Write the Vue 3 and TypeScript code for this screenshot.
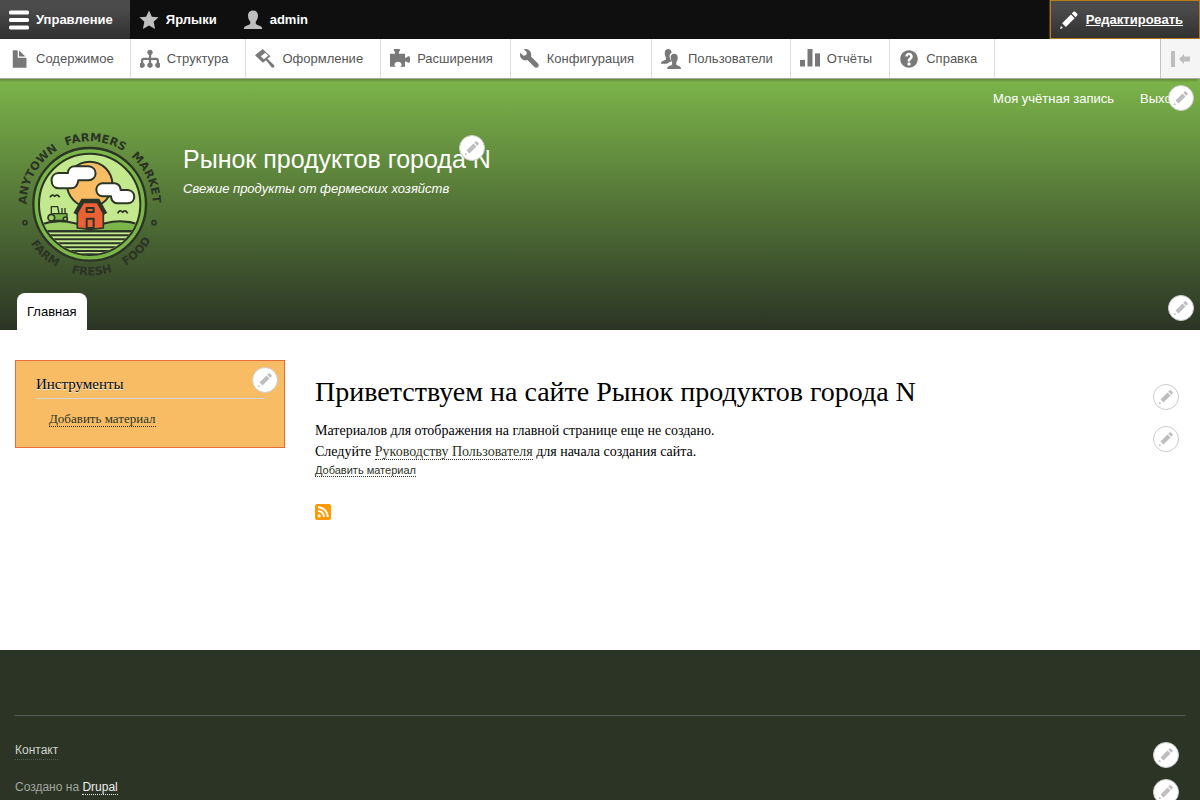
<script setup lang="ts">
import { h, type FunctionalComponent } from 'vue'

interface TrayItem {
  id: string
  label: string
  paths: string[]
}

const pencilPaths: string[] = [
  'M14.545 3.042l-1.586-1.585c-.389-.389-1.025-.389-1.414 0l-1.293 1.293 3 3 1.293-1.293c.389-.389.389-1.026 0-1.415z',
  'M9.5 3.5l3 3-7 7-3-3z',
  'M.908 14.775c-.087.262.055.397.316.312l2.001-.667-1.65-1.646z',
]

const Glyph: FunctionalComponent<{ paths: string[] }> = (props) =>
  h(
    'svg',
    { viewBox: '0 0 16 16', fill: 'currentColor', 'fill-rule': 'evenodd', 'aria-hidden': 'true' },
    props.paths.map((d) => h('path', { d })),
  )
Glyph.props = ['paths']

const hamburger = [
  'M1.2 0.4h13.6a1.2 1.2 0 0 1 1.2 1.2v.8a1.2 1.2 0 0 1-1.2 1.2H1.2A1.2 1.2 0 0 1 0 2.4v-.8A1.2 1.2 0 0 1 1.2.4z',
  'M1.2 6.3h13.6a1.2 1.2 0 0 1 1.2 1.2v.8a1.2 1.2 0 0 1-1.2 1.2H1.2A1.2 1.2 0 0 1 0 8.3v-.8A1.2 1.2 0 0 1 1.2 6.3z',
  'M1.2 12.3h13.6a1.2 1.2 0 0 1 1.2 1.2v.8a1.2 1.2 0 0 1-1.2 1.2H1.2A1.2 1.2 0 0 1 0 14.3v-.8a1.2 1.2 0 0 1 1.2-1.2z',
]
const star = ['M8 .3l2.300 5 5.400.5-4 3.600 1.200 5.700L8 12.300l-4.900 2.800 1.200-5.700-4-3.600 5.400-.5z']
const person = [
  'M8 .3c2.500 0 4 1.700 4 4.200 0 1.900-.8 3.600-1.800 4.600v1.700c0 .6 1 1 2.500 1.500 1.600.5 2.700 1.300 2.700 2.900H.6c0-1.600 1.100-2.400 2.700-2.900 1.500-.5 2.500-.9 2.500-1.500V9.100C4.800 8.100 4 6.400 4 4.500 4 2 5.500.3 8 .3z',
]

const tray: TrayItem[] = [
  {
    id: 'content',
    label: 'Содержимое',
    paths: [
      'M12.502 7h-5c-.276 0-.502-.225-.502-.5v-5c0-.275-.225-.5-.5-.5h-3c-.275 0-.5.225-.5.5v13.029c0 .275.225.5.5.5h10c.275 0 .5-.225.5-.5v-7.029c0-.275-.225-.5-.498-.5z',
      'M8.502 6h4c.275 0 .34-.159.146-.354l-4.293-4.292c-.195-.195-.353-.129-.353.146v4c0 .275.225.5.5.5z',
    ],
  },
  {
    id: 'structure',
    label: 'Структура',
    paths: [
      'M8 .5a2.200 2.200 0 0 1 .9 4.200V7h4.300c1.200 0 2 .8 2 2v1.900a2.200 2.200 0 1 1-1.800 0V9.300c0-.4-.2-.6-.6-.6H8.900v2.200a2.200 2.200 0 1 1-1.800 0V8.700H3.200c-.4 0-.6.2-.6.6v1.600a2.200 2.200 0 1 1-1.800 0V9c0-1.200.8-2 2-2h4.300V4.700A2.200 2.200 0 0 1 8 .5z',
    ],
  },
  {
    id: 'appearance',
    label: 'Оформление',
    paths: [
      'M6.200 0L0 5l6.300 5.900 2.500-2 4.300 5.500c.6.700 1.400.800 2 .200s.500-1.400-.2-2L10 7.800l2.300-2.100z M8.300 2.900l2.300 2.400-3.500 2.900-2.500-2.400z',
    ],
  },
  {
    id: 'extend',
    label: 'Расширения',
    paths: [
      'M3.600 0h3.800c.6 0 .8.700.5 1.300L7.100 2.400v1.400H12v3.200h1l1.200-1c.8-.5 1.800 0 1.800 1.300v2.200c0 1.300-1 1.700-1.800 1.200L13 9.900h-1v4.300H8.200c.9-.7 1.100-1.400 1-2.200-.2-1.100-1.300-1.900-2.800-1.900S3.800 10.900 3.600 12c-.1.800.2 1.500 1 2.200H0V3.800h4V2.400L3.100 1.300C2.800.7 3 0 3.600 0z',
    ],
  },
  {
    id: 'configuration',
    label: 'Конфигурация',
    paths: [
      'M14.416 11.586l-.01-.008v-.001l-5.656-5.656c.15-.449.252-.921.252-1.421 0-2.485-2.016-4.500-4.502-4.500-.505 0-.981.102-1.434.255l2.431 2.431-.588 2.196-2.196.588-2.445-2.445c-.162.464-.268.956-.268 1.475 0 2.486 2.014 4.500 4.500 4.500.5 0 .972-.102 1.421-.251l5.667 5.665c.781.781 2.047.781 2.828 0s.781-2.047 0-2.828z',
    ],
  },
  {
    id: 'people',
    label: 'Пользователи',
    paths: [
      'M5.800 0C7.400 0 8.400 1 8.500 2.700 7.200 3.600 6.700 5 6.900 6.500c.1 1.200.5 2.200 1.200 3-.3.800-1.300 1-2.200 1.400-.4.200-.8.500-1.100.800H0c0-1.300.7-2 1.900-2.400 1.200-.4 2-.6 2-1.100V6.600C3.300 5.800 3 4.600 3 3.200 3 1.200 4 0 5.800 0z',
      'M10.500 3.800c1.900 0 2.900 1.300 2.900 3.200 0 1.500-.5 2.700-1.200 3.500v1.600c0 .5.6.8 1.700 1.200 1.300.4 2.100 1.200 2.100 2.600H4.900c0-1.400.8-2.200 2.100-2.600 1.200-.4 1.900-.7 1.900-1.200v-1.600C8.100 9.700 7.700 8.500 7.700 7c0-1.900 1-3.200 2.800-3.200z',
    ],
  },
  {
    id: 'reports',
    label: 'Отчёты',
    paths: ['M0 8.700h4V14H0z', 'M6 0h4v14H6z', 'M12 3.500h4V14h-4z'],
  },
  {
    id: 'help',
    label: 'Справка',
    paths: [
      'M8.002 1c-3.868 0-7.002 3.134-7.002 7s3.134 7 7.002 7c3.865 0 7-3.134 7-7s-3.135-7-7-7zm3 5c0 .551-.16 1.085-.477 1.586l-.158.22c-.07.093-.189.241-.361.393-.168.148-.35.299-.545.447l-.203.189-.141.129-.096.17-.021.235v.63h-2.001v-.704c.026-.396.078-.73.204-.999.125-.269.271-.498.439-.688l.225-.21-.01-.015.176-.14.137-.128c.186-.139.357-.277.516-.417l.148-.18c.098-.152.168-.323.168-.518 0-.552-.447-1-1.001-1-.553 0-1.002.448-1.002 1h-2c0-1.657 1.343-3 3.002-3 1.656 0 3 1.343 3 3zm-1.750 6.619c0 .344-.281.625-.625.625h-1.250c-.345 0-.626-.281-.626-.625v-1.238c0-.344.281-.625.626-.625h1.250c.344 0 .625.281.625.625v1.238z',
    ],
  },
]
</script>

<template>
  <div class="page">
    <nav class="bar" aria-label="Панель администратора">
      <button type="button" class="bar-tab is-active"><Glyph class="icon" :paths="hamburger" /><span>Управление</span></button>
      <button type="button" class="bar-tab dim"><Glyph class="icon" :paths="star" /><span>Ярлыки</span></button>
      <button type="button" class="bar-tab dim"><Glyph class="icon" :paths="person" /><span>admin</span></button>
      <button type="button" class="bar-tab edit"><Glyph class="icon" :paths="pencilPaths" /><span>Редактировать</span></button>
    </nav>
    <nav class="tray" aria-label="Управление">
      <a v-for="item in tray" :key="item.id" class="tray-link" href="#">
        <Glyph class="icon" :paths="item.paths" /><span>{{ item.label }}</span>
      </a>
      <button type="button" class="orientation" aria-label="Вертикальная ориентация">
        <svg viewBox="0 0 20 16" aria-hidden="true">
          <path fill="#bebebe" d="M1 0h4v16H1zM9 8l5-5v2.500h6v5h-6V13z" />
        </svg>
      </button>
    </nav>

    <header class="header">
      <nav class="account contextual-region" aria-label="Учётная запись">
        <a href="#">Моя учётная запись</a>
        <a href="#">Выход</a>
        <button type="button" class="contextual" aria-label="Настроить меню"><Glyph :paths="pencilPaths" /></button>
      </nav>
      <div class="branding">
        <a href="#" class="logo" aria-label="Главная">
          <svg viewBox="0 0 480 495" aria-hidden="true">
            <defs>
              <path id="arc-top" d="M50 253A189 189 0 0 1 428 253" />
              <path id="arc-bottom" d="M26 253A213 213 0 0 0 452 253" />
              <clipPath id="scene"><circle cx="239" cy="253" r="149" /></clipPath>
            </defs>
            <g class="logo-text">
              <text><textPath href="#arc-top" startOffset="16.500%">ANYTOWN</textPath></text>
              <text><textPath href="#arc-top" startOffset="53%">FARMERS</textPath></text>
              <text><textPath href="#arc-top" startOffset="86%">MARKET</textPath></text>
              <text><textPath href="#arc-bottom" startOffset="26.500%">FARM</textPath></text>
              <text><textPath href="#arc-bottom" startOffset="51%">FRESH</textPath></text>
              <text><textPath href="#arc-bottom" startOffset="75%">FOOD</textPath></text>
            </g>
            <g fill="none" stroke="#2b3425" stroke-width="5">
              <circle cx="45" cy="308" r="6" />
              <circle cx="432" cy="308" r="6" />
            </g>
            <circle cx="239" cy="253" r="169" fill="#7ab648" stroke="#2b3425" stroke-width="7" />
            <circle cx="239" cy="253" r="152" fill="#c3e88d" stroke="#2b3425" stroke-width="6" />
            <g clip-path="url(#scene)" stroke="#2b3425" stroke-width="6" stroke-linejoin="round">
              <circle cx="239" cy="193" r="68" fill="#f8bc65" />
              <path d="M80 318Q160 285 240 328L240 334H80z" fill="#9ed067" />
              <path d="M400 318Q320 285 240 328L240 334H400z" fill="#7ab648" />
              <path d="M80 334H400M80 346H400M80 358H400M80 370H400M80 382H400M80 393H400" />
              <path d="M150 403H330V430H150z" fill="#7ab648" stroke="none" />
              <path d="M160 403H320" />
              <path d="M144 159H174C174 145 184 139 195 139H235C264 141 264 179 235 181H205C203 198 194 205 182 205H146C118 203 118 161 144 159z" fill="#fff" />
              <path d="M277 190H314C326 191 331 198 332 210H354C379 213 379 248 354 250H324C310 250 304 242 303 229H277C253 226 253 193 277 190z" fill="#fff" />
              <path d="M202 324V270L219 243H264L280 270V324L240 328z" fill="#eb6035" stroke-width="5" />
              <path d="M196 282L218 243H264L286 282" fill="none" stroke-width="13" stroke-linejoin="miter" />
              <path d="M230 264H251V276H230z M230 296H251V324H230z" fill="#eb6035" />
              <g fill="none" stroke-width="5">
                <path d="M120 232Q127 220 134 229Q141 220 149 232M323 280Q330 267 338 277Q345 267 353 280" />
                <path d="M124 281V260H143L147 280M156 281V264M165 264V282" stroke-width="4" />
                <path d="M128 281H171V301H128z" fill="#7ab648" stroke-width="4" />
                <circle cx="124" cy="293" r="10" fill="#9ed067" />
                <circle cx="166" cy="297" r="6" fill="#9ed067" />
              </g>
            </g>
          </svg>
        </a>
        <div class="site-text contextual-region">
          <a class="site-name" href="#">Рынок продуктов города N</a>
          <p class="slogan">Свежие продукты от фермеских хозяйств</p>
          <button type="button" class="contextual" aria-label="Настроить блок"><Glyph :paths="pencilPaths" /></button>
        </div>
      </div>
      <nav class="main-menu contextual-region" aria-label="Основная навигация">
        <a href="#">Главная</a>
        <button type="button" class="contextual" aria-label="Настроить меню"><Glyph :paths="pencilPaths" /></button>
      </nav>
    </header>

    <div class="main">
      <aside class="tools contextual-region">
        <h2>Инструменты</h2>
        <a href="#">Добавить материал</a>
        <button type="button" class="contextual" aria-label="Настроить блок"><Glyph :paths="pencilPaths" /></button>
      </aside>
      <main class="content">
        <div class="title-block contextual-region">
          <h1>Приветствуем на сайте Рынок продуктов города N</h1>
          <button type="button" class="contextual" aria-label="Настроить заголовок"><Glyph :paths="pencilPaths" /></button>
        </div>
        <div class="text-block contextual-region">
          <p>Материалов для отображения на главной странице еще не создано.</p>
          <p>Следуйте <a href="#">Руководству Пользователя</a> для начала создания сайта.</p>
          <div class="add"><a href="#">Добавить материал</a></div>
          <button type="button" class="contextual" aria-label="Настроить представление"><Glyph :paths="pencilPaths" /></button>
        </div>
        <a class="feed" href="#" aria-label="RSS">
          <svg viewBox="0 0 16 16" aria-hidden="true">
            <rect width="16" height="16" rx="2" fill="#ff9900" />
            <circle cx="4.200" cy="11.700" r="1.500" fill="#fff" />
            <path d="M3 7a6 6 0 0 1 6 6M3 3.300a9.700 9.700 0 0 1 9.700 9.700" fill="none" stroke="#fff" stroke-width="2" />
          </svg>
        </a>
      </main>
    </div>

    <footer class="footer">
      <div class="footer-inner">
        <div class="footer-row contextual-region">
          <a class="contact" href="#">Контакт</a>
          <button type="button" class="contextual" aria-label="Настроить меню"><Glyph :paths="pencilPaths" /></button>
        </div>
        <div class="footer-row contextual-region">
          <span>Создано на <a class="powered" href="#">Drupal</a></span>
          <button type="button" class="contextual" aria-label="Настроить блок"><Glyph :paths="pencilPaths" /></button>
        </div>
      </div>
    </footer>
  </div>
</template>

<style>
body {
  margin: 0;
  background: #2b3425;
}
</style>

<style scoped>
.page {
  font-family: "Liberation Sans", Arial, sans-serif;
  font-size: 13px;
  color: #000;
  background: #fff;
}
a {
  color: inherit;
  text-decoration: none;
}
button {
  font: inherit;
  border: 0;
  cursor: pointer;
}
h1, h2, p {
  margin: 0;
  font-weight: normal;
}
.bar {
  display: flex;
  height: 39px;
  background: #0f0f0f;
}
.bar-tab {
  display: flex;
  align-items: center;
  gap: 7px;
  padding: 0 17px 0 9px;
  color: #fff;
  background: transparent;
  font-weight: bold;
  white-space: nowrap;
}
.bar-tab.is-active, .bar-tab.edit {
  background-image: linear-gradient(rgba(255, 255, 255, 0.25) 20%, transparent 200%);
}
.bar-tab.dim .icon {
  color: #bebebe;
}
.bar-tab.edit {
  margin-left: auto;
  outline: 1px solid #b87e1c;
  outline-offset: -1px;
  box-shadow: 0 0 0 1px #5a3d0c;
  text-decoration: underline;
}
.icon {
  flex: none;
  width: 20px;
  height: 20px;
}
.tray {
  position: relative;
  z-index: 1;
  display: flex;
  height: 39px;
  background: #fff;
  border-bottom: 1px solid #aaa;
  box-shadow: -2px 1px 3px rgba(0, 0, 0, 0.33);
}
.tray-link {
  display: flex;
  align-items: center;
  gap: 7px;
  padding: 0 17px 0 9px;
  color: #565656;
  border-right: 1px solid #ddd;
  white-space: nowrap;
}
.tray-link:first-child {
  padding-right: 16px;
}
.tray-link .icon {
  color: #787878;
}
.orientation {
  display: flex;
  align-items: center;
  margin-left: auto;
  padding: 0 10px 0 9px;
  background: #f5f5f5;
  border-left: 1px solid #c4c4c4;
}
.orientation svg {
  width: 20px;
  height: 16px;
}
.header {
  color: #fff;
  background: linear-gradient(#7cb54a, #2b3425);
}
.contextual-region {
  position: relative;
}
.contextual {
  position: absolute;
  top: 6px;
  right: 6px;
  display: flex;
  align-items: center;
  justify-content: center;
  box-sizing: border-box;
  width: 26px;
  height: 26px;
  padding: 0;
  color: #bebebe;
  background: #fff;
  border: 1px solid #ccc;
  border-radius: 50%;
}
.contextual svg {
  width: 16px;
  height: 16px;
}
.account {
  display: flex;
  justify-content: flex-end;
  gap: 26px;
  height: 41px;
  padding: 0 21px;
  line-height: 39px;
  box-sizing: border-box;
}
.branding {
  display: flex;
  align-items: flex-start;
  gap: 13px;
  padding: 0 10px;
}
.logo, .logo svg {
  display: block;
  width: 160px;
  height: 165px;
}
.logo-text {
  font-family: "DejaVu Sans", sans-serif;
  font-size: 34px;
  font-weight: bold;
  fill: #2b3425;
  text-anchor: middle;
}
.site-text {
  padding-top: 24px;
}
.site-text .contextual {
  top: 15px;
}
.site-name {
  display: block;
  font-size: 25px;
  line-height: 31px;
}
.slogan {
  margin-top: 6px;
  font-size: 13px;
  font-style: italic;
  line-height: 16px;
}
.main-menu {
  display: flex;
  padding: 8px 17px 0;
}
.main-menu a {
  padding: 0 11px 0 10px;
  line-height: 37px;
  color: #000;
  background: #fff;
  border-radius: 8px 8px 0 0;
}
.main-menu .contextual {
  top: 10px;
}
.main {
  display: grid;
  grid-template-columns: 270px 1fr;
  align-items: start;
  gap: 30px;
  min-height: 290px;
  padding: 30px 15px 0;
  font-family: "Liberation Serif", "Times New Roman", serif;
}
.tools {
  padding: 13px 20px 20px;
  background: #f8bc65;
  border: 1px solid #e96b36;
}
.tools h2 {
  margin-bottom: 12px;
  padding-bottom: 4px;
  font-size: 15px;
  line-height: 20px;
  border-bottom: 1px solid #d6d6d6;
  text-shadow: 0 1px 0 #fff;
}
.tools a {
  display: table;
  margin-left: 13px;
  font-size: 13px;
  line-height: 15px;
  color: #2b3425;
  border-bottom: 1px dotted #2b3425;
}
.title-block {
  padding-top: 18px;
}
.title-block .contextual {
  top: 24px;
}
h1 {
  font-size: 28px;
  line-height: 28px;
}
.text-block {
  margin-top: 14px;
  font-size: 14px;
  line-height: 21px;
}
.text-block p a, .add a {
  color: #2b3425;
  border-bottom: 1px dotted #2b3425;
}
.add {
  font-family: "Liberation Sans", Arial, sans-serif;
  font-size: 11px;
  line-height: 16px;
}
.feed {
  display: block;
  width: 16px;
  margin-top: 26px;
}
.feed svg {
  display: block;
}
.footer {
  padding: 65px 15px 5px;
  font-size: 12px;
  color: #a3a79f;
  background: #2b3425;
}
.footer-inner {
  padding-top: 20px;
  border-top: 1px solid #555855;
}
.footer-row {
  height: 37px;
  line-height: 28px;
}
.contact {
  padding-bottom: 2px;
  color: #d0d2cd;
  border-bottom: 1px dotted #555d50;
}
.powered {
  color: #eee;
  border-bottom: 1px dotted #eee;
}
</style>
